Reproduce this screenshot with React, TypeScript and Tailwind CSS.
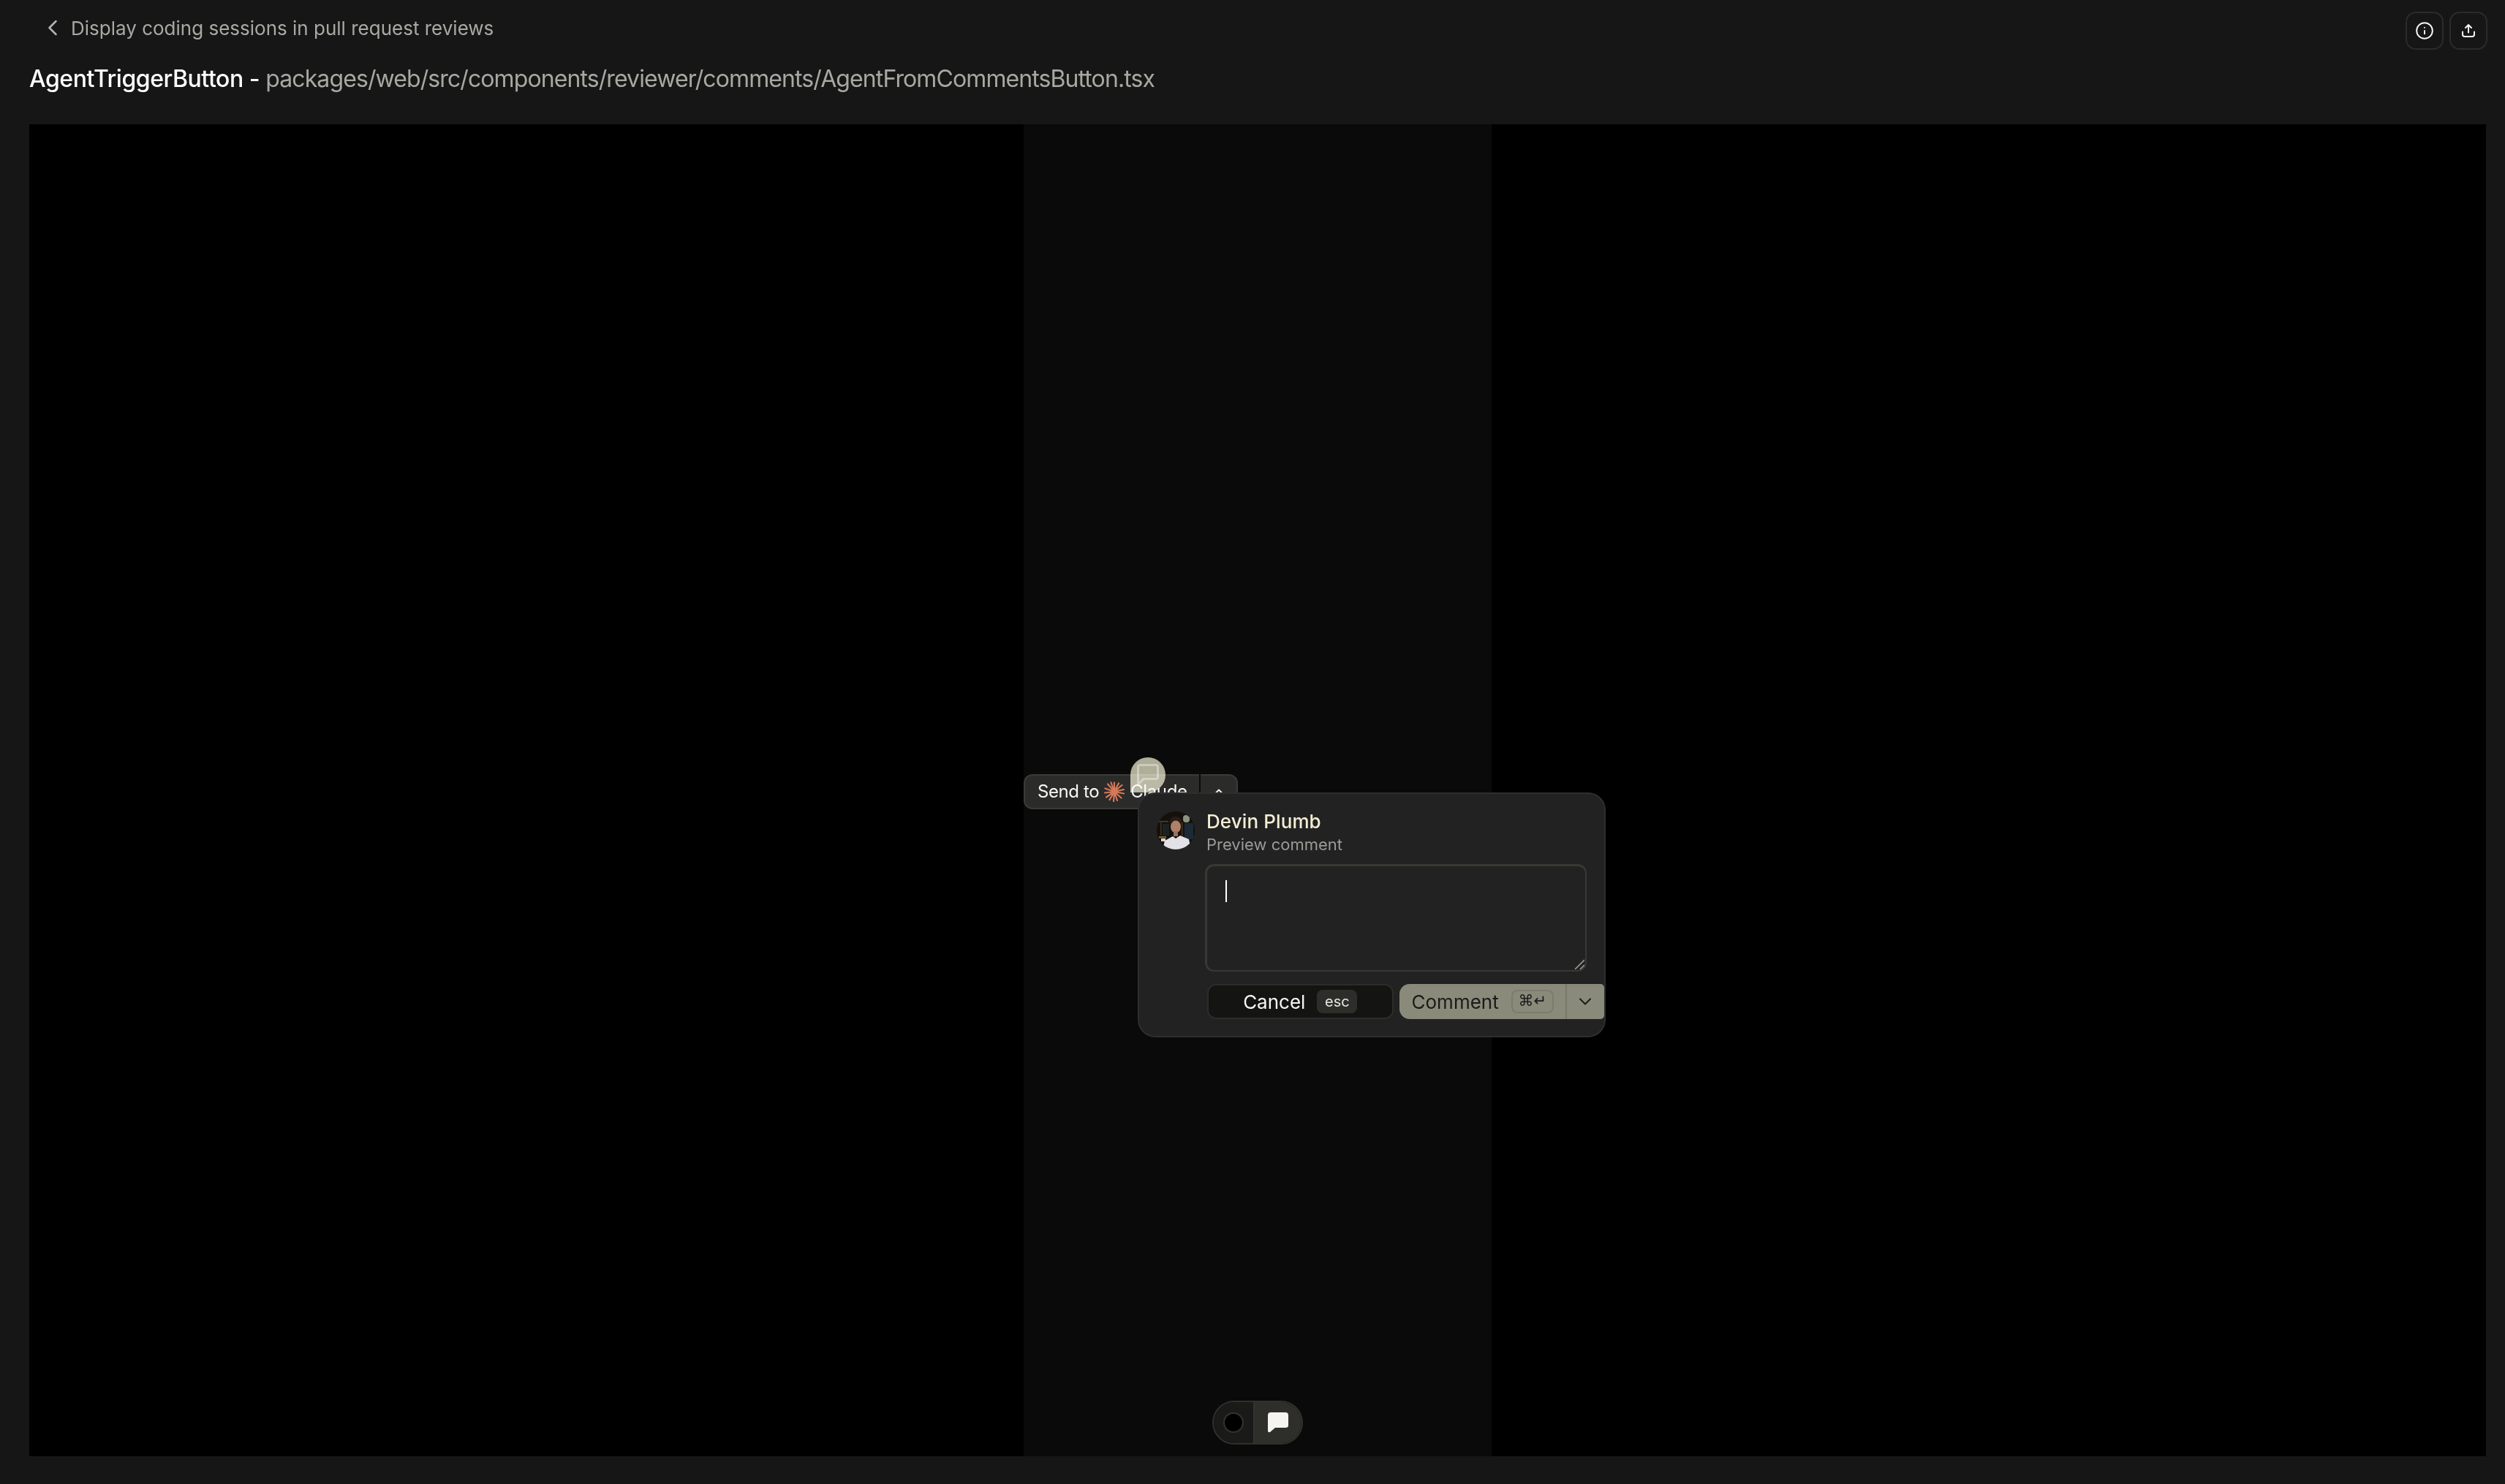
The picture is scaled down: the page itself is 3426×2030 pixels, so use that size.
import { ChevronDown, ChevronLeft, ChevronUp, Info } from "lucide-react";

const Avatar = () => (
  <svg viewBox="0 0 52 52" className="w-[52px] h-[52px] shrink-0 rounded-full">
    <defs>
      <filter id="soft" x="-10%" y="-10%" width="120%" height="120%">
        <feGaussianBlur stdDeviation="0.7" />
      </filter>
    </defs>
    <rect width="52" height="52" fill="#14110d" />
    <g filter="url(#soft)">
      <rect x="1" y="13" width="15" height="1.5" fill="#5a3f24" />
      <rect x="5" y="15" width="1.5" height="18" fill="#46331e" />
      <rect x="8" y="17" width="9" height="16" fill="#1a2422" />
      <rect x="36" y="5" width="9" height="10" rx="4" fill="#8d927e" />
      <rect x="34" y="15" width="1.5" height="22" fill="#46341f" />
      <rect x="38" y="16" width="12" height="22" fill="#1b2c34" />
      <rect x="3" y="34" width="10" height="2.5" fill="#7d5f30" />
      <rect x="6" y="37" width="6" height="4" fill="#d9d5ca" />
      <ellipse cx="26" cy="14" rx="8.5" ry="7" fill="#2c1d14" />
      <ellipse cx="26" cy="21" rx="7" ry="8.5" fill="#ad8269" />
      <rect x="23" y="27" width="6" height="7" fill="#97735c" />
      <path d="M8 52 L11 40 L22 34 L26 37 L32 33 L44 38 L47 52 Z" fill="#e2e2e6" />
    </g>
  </svg>
);

const ClaudeStar = () => (
  <svg viewBox="0 0 28 28" className="w-[28px] h-[28px] shrink-0" stroke="#d4795a" strokeWidth="2.2" strokeLinecap="round" fill="#d4795a">
    <circle cx="14" cy="14" r="4.5" stroke="none" />
    <path d="M14 14 L14 1.5 M14 14 L20 2.5 M14 14 L24.5 5 M14 14 L27 11 M14 14 L27 16.5 M14 14 L23.5 22.5 M14 14 L18 26 M14 14 L13 27.5 M14 14 L7.5 25 M14 14 L3 21.5 M14 14 L1 15.5 M14 14 L1.5 9.5 M14 14 L5 3.5 M14 14 L9.5 1.5" />
  </svg>
);

const ShareIcon = () => (
  <svg viewBox="0 0 20 20" className="w-[20px] h-[20px]" fill="none" stroke="#f5f5f3" strokeWidth="2" strokeLinecap="round" strokeLinejoin="round">
    <path d="M10 12.5 V2.5 M6 6 L10 2 L14 6" />
    <path d="M2 11.5 V15 Q2 18 5 18 H15 Q18 18 18 15 V11.5" />
  </svg>
);

const App = () => {
  return (
    <div className="w-[3426px] h-[2030px] bg-[#161616] flex flex-col overflow-hidden font-['Inter',sans-serif]">
      <header className="h-[170px] shrink-0 pl-[40px] pr-[24px] pt-[16px] flex justify-between items-start">
        <div className="flex flex-col">
          <div className="h-[44px] flex items-center pl-[14px] gap-[7px] text-[26px] text-[#a9a9a4]">
            <ChevronLeft className="w-[36px] h-[36px] text-[#b4b4af]" strokeWidth={1.7} />
            <span>Display coding sessions in pull request reviews</span>
          </div>
          <h1 className="mt-[28px] text-[32px] leading-[40px] tracking-[-0.9px] text-[#a8a8a3] font-normal whitespace-nowrap">
            <span className="text-white font-medium tracking-[-0.45px]">AgentTriggerButton - </span>
            packages/web/src/components/reviewer/comments/AgentFromCommentsButton.tsx
          </h1>
        </div>
        <div className="flex gap-[8px]">
          <button className="w-[52px] h-[52px] rounded-[14px] border-2 border-[#2b2b2a] flex items-center justify-center text-[#f5f5f3]">
            <Info className="w-[26px] h-[26px]" strokeWidth={1.8} />
          </button>
          <button className="w-[52px] h-[52px] rounded-[14px] border-2 border-[#2b2b2a] flex items-center justify-center">
            <ShareIcon />
          </button>
        </div>
      </header>

      <main className="relative ml-[40px] mr-[26px] h-[1822px] flex">
        <div className="flex-1 bg-black" />
        <div className="w-[640px] bg-[#0a0a0a]" />
        <div className="flex-1 bg-black" />

        {/* send to agent button, sits on the preview */}
        <div className="absolute left-[1360px] top-[889px] flex gap-[2px]">
          <div className="w-[240px] h-[48px] rounded-l-[12px] bg-[#2b2b2a] border-2 border-r-0 border-[#3a3a38] flex items-center pl-[17px] text-[24px] tracking-[-0.4px] text-[#f6f6f3] whitespace-nowrap">
            <span>Send to</span>
            <span className="ml-[7px] mr-[8px]"><ClaudeStar /></span>
            <span>Claude</span>
          </div>
          <div className="w-[51px] h-[48px] rounded-r-[12px] bg-[#2b2b2a] border-2 border-l-0 border-[#3a3a38] flex items-center justify-center text-[#f6f6f3]">
            <ChevronUp className="w-[20px] h-[20px]" strokeWidth={2.2} />
          </div>
        </div>

        {/* comment pin */}
        <div className="absolute left-[1506px] top-[866px] w-[48px] h-[48px] rounded-full rounded-bl-none bg-[#acab95] mix-blend-screen flex items-center justify-center">
          <svg viewBox="0 0 30 30" className="w-[30px] h-[30px]" fill="none" stroke="#cfcec1" strokeWidth="2.6" strokeLinejoin="round">
            <path d="M4 1.5 H26 Q28.5 1.5 28.5 4 V18 Q28.5 20.5 26 20.5 H9 L1.5 28 V4 Q1.5 1.5 4 1.5 Z" />
          </svg>
        </div>

        {/* comment popover */}
        <div className="absolute left-[1516px] top-[914px] w-[640px] h-[335px] rounded-[24px] bg-[#222222] border-2 border-[#2e2e2c] pl-[24px] pt-[24px] pr-0 flex flex-col">
          <div className="flex gap-[16px]">
            <Avatar />
            <div className="flex flex-col -mt-[2px]">
              <span className="text-[26px] leading-[32px] tracking-[0.1px] font-medium text-[#f3edd5]">Devin Plumb</span>
              <span className="text-[22px] leading-[28px] text-[#9a9a96] mt-[1px]">Preview comment</span>
            </div>
          </div>

          <div className="relative ml-[66px] mt-[13px] w-[522px] h-[147px] rounded-[12px] border-[3px] border-r-2 border-b-2 border-[#383834] bg-[#222222]">
            <div className="absolute left-[25px] top-[19px] w-[2px] h-[30px] bg-white" />
            <svg viewBox="0 0 14 14" className="absolute right-[1px] bottom-[1px] w-[14px] h-[14px]" stroke="#9a9a98" strokeWidth="1.6">
              <path d="M1 14 L14 1 M8 14 L14 8" />
            </svg>
          </div>

          <div className="flex ml-[69px] mt-[17px] gap-[8px]">
            <div className="w-[255px] h-[48px] rounded-[12px] bg-[#141413] border-2 border-[#2c2c2a] flex items-center justify-center gap-[16px]">
              <span className="text-[26px] text-[#f6f6f3]">Cancel</span>
              <span className="w-[55px] h-[32px] rounded-[8px] bg-[#2d2e2a] text-[20px] text-[#e4e4e0] flex items-center justify-center">esc</span>
            </div>
            <div className="w-[281px] h-[48px] rounded-l-[14px] rounded-r-[5px] bg-[#8a8a7b] flex items-center text-[#1a1a18]">
              <div className="w-[229px] h-full flex items-center pl-[17px] border-r-2 border-[#797969]">
                <span className="text-[26px]">Comment</span>
                <span className="ml-[17px] w-[58px] h-[32px] rounded-[8px] border-2 border-[#7c7c6d] text-[21px] flex items-center justify-center font-['DejaVu_Sans',sans-serif]">⌘↵</span>
              </div>
              <div className="flex-1 flex items-center justify-center">
                <ChevronDown className="w-[28px] h-[28px]" strokeWidth={1.7} />
              </div>
            </div>
          </div>
        </div>

        {/* mode toggle */}
        <div className="absolute left-[1618px] top-[1746px] w-[124px] h-[60px] rounded-full border-2 border-[#30302e] overflow-hidden flex">
          <div className="w-[56px] bg-[#1a1a19] border-r-2 border-[#333331] flex items-center justify-center">
            <span className="w-[28px] h-[28px] rounded-full bg-black border-2 border-[#333331]" />
          </div>
          <div className="flex-1 bg-[#2e2e2b] flex items-center justify-center">
            <svg viewBox="0 0 28 28" className="w-[28px] h-[28px]" fill="#f6f4ee">
              <path d="M4 0 H24 Q28 0 28 4 V18 Q28 21 24 21 H10 L3 27 Q0 28 0 25 V4 Q0 0 4 0 Z" />
            </svg>
          </div>
        </div>
      </main>
    </div>
  );
};

export default App;
